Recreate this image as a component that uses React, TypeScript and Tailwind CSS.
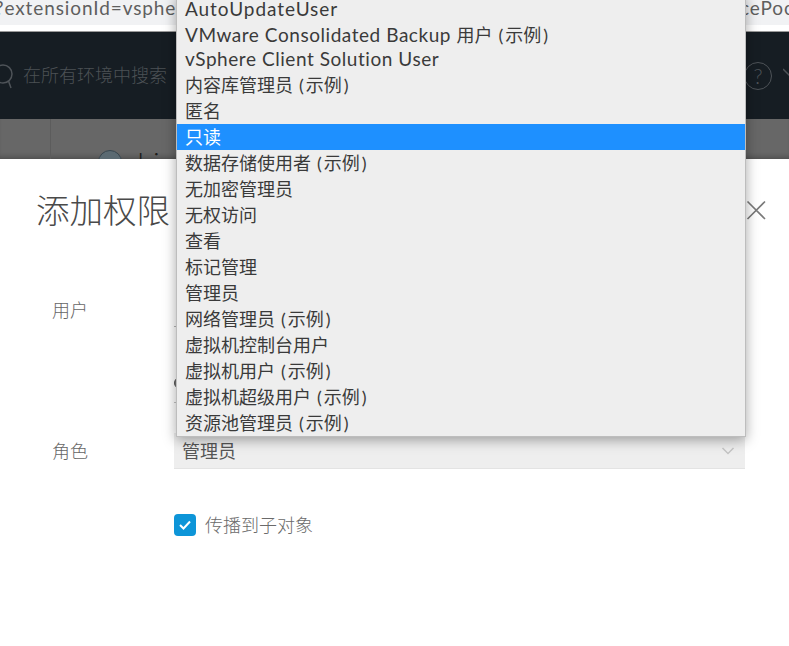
import React from "react";

const roles: { key: string; latin?: string; cjk?: string; ex?: boolean; shift?: boolean; wide?: boolean }[] = [
  { key: "a", latin: "AutoUpdateUser", shift: true, wide: true },
  { key: "b", latin: "VMware Consolidated Backup ", cjk: "用户", ex: true, shift: true },
  { key: "c", latin: "vSphere Client Solution User" },
  { key: "d", cjk: "内容库管理员", ex: true },
  { key: "e", cjk: "匿名" },
  { key: "f", cjk: "只读" },
  { key: "g", cjk: "数据存储使用者", ex: true },
  { key: "h", cjk: "无加密管理员" },
  { key: "i", cjk: "无权访问" },
  { key: "j", cjk: "查看" },
  { key: "k", cjk: "标记管理" },
  { key: "l", cjk: "管理员" },
  { key: "m", cjk: "网络管理员", ex: true },
  { key: "n", cjk: "虚拟机控制台用户" },
  { key: "o", cjk: "虚拟机用户", ex: true },
  { key: "p", cjk: "虚拟机超级用户", ex: true },
  { key: "q", cjk: "资源池管理员", ex: true },
];

export default function App() {
  return (
    <div className="relative h-[646px] w-[789px] overflow-hidden bg-white [font-family:Lato,'Noto_Sans_CJK_SC',sans-serif]">
      {/* browser address strip */}
      <div className="flex h-[25px] items-start justify-between overflow-hidden bg-[#f1f2f4] text-[19px] leading-[16px] tracking-[0.9px] text-[#5f5f5f]">
        <span className="ml-[-5px] whitespace-nowrap">?extensionId=vsphere</span>
        <span className="mr-[-12px] whitespace-nowrap">cePool</span>
      </div>
      <div className="h-[7px] border-b border-[#9a9a9a] bg-white" />

      {/* app header, dimmed */}
      <div className="flex h-[87px] items-center justify-between bg-[#161d23] text-[#4c5155]">
        <div className="flex items-center gap-[5px]">
          <svg width="18" height="30" viewBox="0 0 18 30" fill="none" stroke="#4e5358" strokeWidth="1.5" className="mt-[2px]">
            <circle cx="3" cy="12" r="9" />
            <path d="M8.5 19 L11 26" />
          </svg>
          <span className="text-[18px] font-light">在所有环境中搜索</span>
        </div>
        <div className="flex items-center gap-[11px]">
          <div className="flex h-[28px] w-[28px] items-center justify-center rounded-full border-[1.5px] border-[#4e5358] text-[21px] font-light text-[#4e5358]">
            ?
          </div>
          <svg width="6" height="14" viewBox="0 0 6 14" fill="none" stroke="#4e5358" strokeWidth="1.5" className="mt-[-6px]">
            <path d="M0 3 L6 9 L12 3" />
          </svg>
        </div>
      </div>

      {/* dimmed page bar */}
      <div className="flex h-[40px] bg-[#676767] shadow-[inset_0_-5px_5px_-3px_rgba(0,0,0,0.25)]">
        <div className="h-full w-[51px] border-r border-[#5c5c5c]" />
        <div className="ml-[47px] mt-[31px] flex items-start gap-[15px]">
          <div className="h-[24px] w-[24px] rounded-full border border-[#38464f] bg-[#5b6a72]" />
          <span className="mt-[-9px] text-[28px] font-light tracking-[2px] text-[#1c1c1c]">Lin</span>
        </div>
      </div>

      {/* modal */}
      <div className="relative h-[487px] bg-white">
        <div className="flex items-start justify-between pl-[36px] pr-[21px] pt-[27px]">
          <h1 className="text-[33.5px] font-light leading-[48px] text-[#4a4a4a]">添加权限</h1>
          <svg width="24" height="24" viewBox="0 0 24 24" fill="none" stroke="#7a7a7a" strokeWidth="1.6" className="mt-[12px]">
            <path d="M3.5 3.5 L21 21 M21 3.5 L3.5 21" />
          </svg>
        </div>

        <div className="ml-[52px] mt-[63px] flex w-[693px] items-start">
          <span className="w-[122px] text-[18px] font-light leading-[26px] text-[#666]">用户</span>
          <div className="flex-1">
            <div className="h-[30px] border-b border-[#b5b5b5]" />
            <div className="mt-[50px] h-[12px] w-[12px] rounded-full border border-[#555] bg-[#777]" />
            <div className="mt-[13px] border-b border-[#c4c4c4]" />
          </div>
        </div>

        <div className="ml-[52px] mt-[30px] flex w-[693px] items-center">
          <span className="w-[122px] text-[18px] font-light leading-[26px] text-[#666]">角色</span>
          <div className="flex h-[36px] flex-1 items-center justify-between border-b border-[#e3e3e3] bg-[#eeeeee] pl-[8px] pr-[10px] text-[18px] text-[#565656]">
            <span className="mt-[2px]">管理员</span>
            <svg width="14" height="10" viewBox="0 0 14 10" fill="none" stroke="#c4c4c4" strokeWidth="1.5">
              <path d="M1.5 2 L7 7.5 L12.5 2" />
            </svg>
          </div>
        </div>

        <div className="ml-[174px] mt-[43px] flex items-center gap-[9px]">
          <div className="flex h-[22px] w-[22px] items-center justify-center rounded-[4px] bg-[#0d95d8]">
            <svg width="14" height="12" viewBox="0 0 14 12" fill="none" stroke="white" strokeWidth="2">
              <path d="M2 6 L5.5 9.5 L12 2.5" />
            </svg>
          </div>
          <span className="text-[18px] font-light leading-[26px] text-[#6a6a6a]">传播到子对象</span>
        </div>
      </div>

      {/* native select popup */}
      <ul className="absolute left-[176px] top-[-6px] w-[570px] border-x border-b border-[#bdbdbd] bg-[#eeeeee] shadow-[0_3px_12px_rgba(0,0,0,0.35)]">
        {roles.map((r) => (
          <li
            key={r.key}
            className={
              "h-[26px] whitespace-nowrap pl-[8px] text-[18px] leading-[26px] " +
              (r.shift ? "pt-[2px] " : "") +
              (r.key === "f" ? "bg-[#1e90ff] text-white" : "text-[#3a3a3a]")
            }
          >
            {r.latin && (
              <span className={"whitespace-pre text-[19px] " + (r.wide ? "tracking-[0.95px]" : "tracking-[0.55px]")}>
                {r.latin}
              </span>
            )}
            {r.cjk}
            {r.ex && (
              <span className="ml-[6px]">
                <span className="mr-[2px]">(</span>示例<span className="ml-[2px]">)</span>
              </span>
            )}
          </li>
        ))}
      </ul>
    </div>
  );
}
